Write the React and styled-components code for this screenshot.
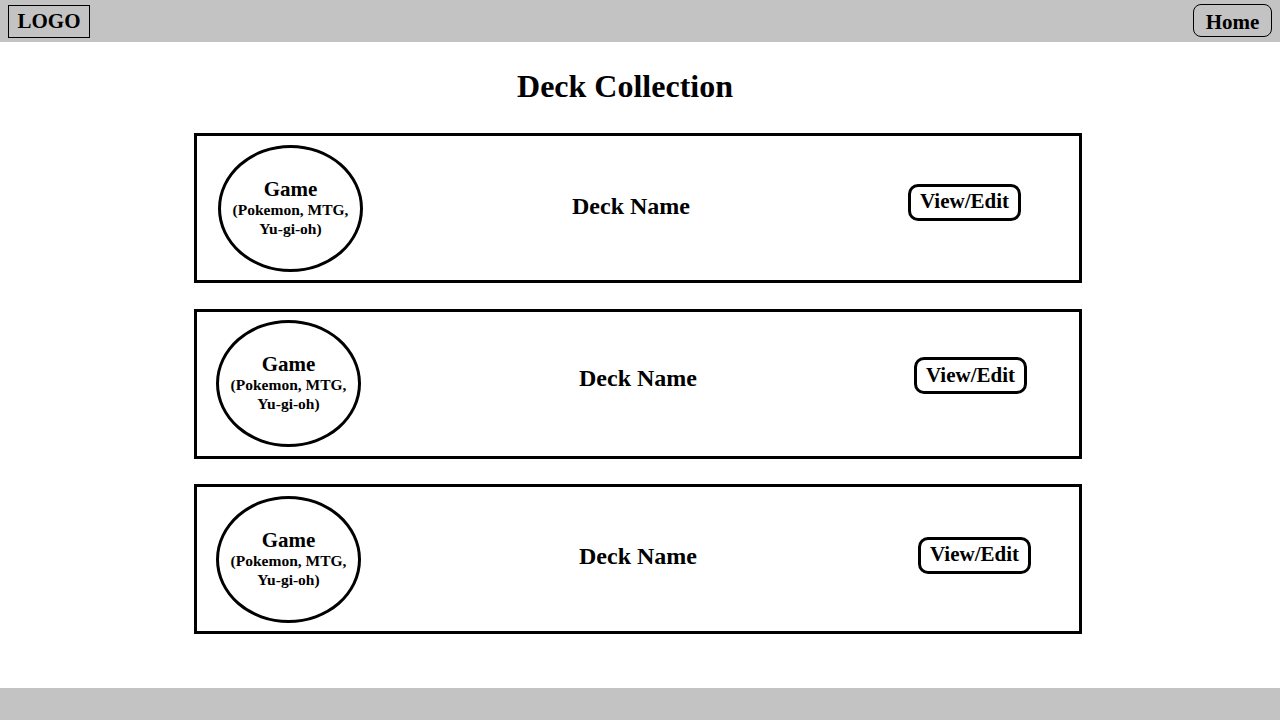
import React from 'react';
import styled, { createGlobalStyle } from 'styled-components';

const GlobalStyle = createGlobalStyle`
    html, body{
        margin: 0;
        padding: 0;
        background: #ffffff;
        font-family: "Liberation Serif", "Times New Roman", serif;
        color: #000;
    }
`

const Page = styled.div`
    height: 720px;
    display: flex;
    flex-direction: column;
`

const Header = styled.header`
    height: 42px;
    background: #c3c3c3;
    display: flex;
    align-items: flex-start;
    justify-content: space-between;
    padding: 0 8px;
`

const Logo = styled.div`
    margin-top: 5px;
    width: 80px;
    height: 31px;
    border: 1px solid #000;
    display: flex;
    align-items: center;
    justify-content: center;
    font-size: 21px;
    font-weight: 700;
`

const HomeButton = styled.button`
    margin-top: 4px;
    width: 79px;
    height: 33px;
    border: 1px solid #000;
    border-radius: 8px;
    background: transparent;
    font-family: inherit;
    font-size: 21px;
    font-weight: 700;
    padding: 3px 0 0;
    color: #000;
`

const Main = styled.main`
    flex: 1;
    display: flex;
    flex-direction: column;
    align-items: center;
`

const Title = styled.h1`
    margin: 26px 30px 28px 0;
    font-size: 32px;
    line-height: 37px;
    font-weight: 700;
`

const List = styled.div`
    display: flex;
    flex-direction: column;
    gap: 25.5px;
    width: 888px;
    margin-right: 4px;
`

const Card = styled.div`
    height: 150px;
    box-sizing: border-box;
    border: 3px solid #000;
    display: grid;
    grid-template-columns: 1fr auto 1fr;
    align-items: center;
`

const GameCircle = styled.div`
    justify-self: start;
    margin-left: ${p => p.$left}px;
    width: 145px;
    height: 127px;
    box-sizing: border-box;
    border: 3px solid #000;
    border-radius: 50%;
    display: flex;
    flex-direction: column;
    align-items: center;
    justify-content: center;
    text-align: center;
    padding-bottom: ${p => p.$lift}px;
`

const GameTitle = styled.div`
    font-size: 21px;
    font-weight: 700;
    line-height: 22px;
`

const GameList = styled.div`
    font-size: 15.5px;
    font-weight: 700;
    line-height: 19px;
`

const DeckName = styled.div`
    font-size: 24px;
    font-weight: 700;
    margin-left: ${p => p.$shift}px;
    margin-bottom: ${p => p.$lift}px;
`

const EditButton = styled.button`
    justify-self: end;
    margin-right: ${p => p.$right}px;
    margin-bottom: ${p => p.$lift}px;
    width: 113px;
    height: 37px;
    box-sizing: border-box;
    border: 3px solid #000;
    border-radius: 10px;
    background: #fff;
    font-family: inherit;
    font-size: 21px;
    font-weight: 700;
    color: #000;
    padding: 0 0 1px;
`

const Footer = styled.footer`
    height: 32px;
    background: #c3c3c3;
`

const decks = [
    { circleLeft: 21, circleLift: 1, nameShift: -14, nameLift: 4, btnRight: 58, btnLift: 12 },
    { circleLeft: 19, circleLift: 1, nameShift: 0, nameLift: 10, btnRight: 52, btnLift: 16 },
    { circleLeft: 19, circleLift: 1, nameShift: 0, nameLift: 6, btnRight: 48, btnLift: 8 },
]

const App = () => {
    return (
        <Page>
            <GlobalStyle />
            <Header>
                <Logo>LOGO</Logo>
                <HomeButton>Home</HomeButton>
            </Header>

            <Main>
                <Title>Deck Collection</Title>
                <List>
                    {decks.map((d, i) => (
                        <Card key={i}>
                            <GameCircle $left={d.circleLeft} $lift={d.circleLift}>
                                <GameTitle>Game</GameTitle>
                                <GameList>(Pokemon, MTG,<br />Yu-gi-oh)</GameList>
                            </GameCircle>
                            <DeckName $shift={d.nameShift} $lift={d.nameLift}>Deck Name</DeckName>
                            <EditButton $right={d.btnRight} $lift={d.btnLift}>View/Edit</EditButton>
                        </Card>
                    ))}
                </List>
            </Main>

            <Footer />
        </Page>
    )
}

export default App
